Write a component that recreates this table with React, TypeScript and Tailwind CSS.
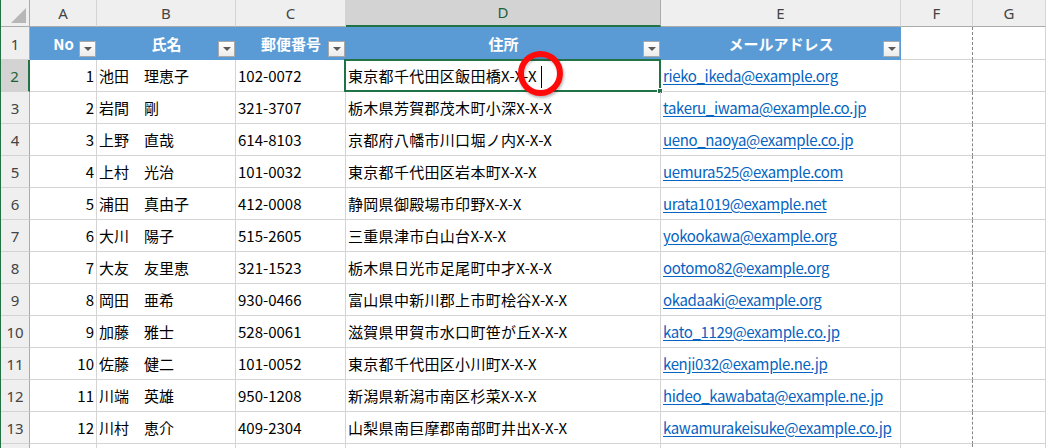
import React from 'react';

type Row = {
  no: number;
  name: string;
  zip: string;
  address: string;
  email: string;
};

const rows: Row[] = [
  { no: 1, name: '池田　理恵子', zip: '102-0072', address: '東京都千代田区飯田橋X-X-X', email: 'rieko_ikeda@example.org' },
  { no: 2, name: '岩間　剛', zip: '321-3707', address: '栃木県芳賀郡茂木町小深X-X-X', email: 'takeru_iwama@example.co.jp' },
  { no: 3, name: '上野　直哉', zip: '614-8103', address: '京都府八幡市川口堀ノ内X-X-X', email: 'ueno_naoya@example.co.jp' },
  { no: 4, name: '上村　光治', zip: '101-0032', address: '東京都千代田区岩本町X-X-X', email: 'uemura525@example.com' },
  { no: 5, name: '浦田　真由子', zip: '412-0008', address: '静岡県御殿場市印野X-X-X', email: 'urata1019@example.net' },
  { no: 6, name: '大川　陽子', zip: '515-2605', address: '三重県津市白山台X-X-X', email: 'yokookawa@example.org' },
  { no: 7, name: '大友　友里恵', zip: '321-1523', address: '栃木県日光市足尾町中才X-X-X', email: 'ootomo82@example.org' },
  { no: 8, name: '岡田　亜希', zip: '930-0466', address: '富山県中新川郡上市町桧谷X-X-X', email: 'okadaaki@example.org' },
  { no: 9, name: '加藤　雅士', zip: '528-0061', address: '滋賀県甲賀市水口町笹が丘X-X-X', email: 'kato_1129@example.co.jp' },
  { no: 10, name: '佐藤　健二', zip: '101-0052', address: '東京都千代田区小川町X-X-X', email: 'kenji032@example.ne.jp' },
  { no: 11, name: '川端　英雄', zip: '950-1208', address: '新潟県新潟市南区杉菜X-X-X', email: 'hideo_kawabata@example.ne.jp' },
  { no: 12, name: '川村　恵介', zip: '409-2304', address: '山梨県南巨摩郡南部町井出X-X-X', email: 'kawamurakeisuke@example.co.jp' },
];

const grid = 'grid grid-cols-[29px_67px_139px_110px_315px_240px_72px_1fr]';
const letters = ['A', 'B', 'C', 'D', 'E', 'F', 'G'];
const headers = ['No', '氏名', '郵便番号', '住所', 'メールアドレス'];

// フィルターボタン
function FilterButton() {
  return (
    <div className="absolute right-[1px] bottom-[3px] flex h-[16px] w-[17px] items-center justify-center border border-[#a9a9a9] bg-gradient-to-b from-[#ffffff] to-[#ececec]">
      <svg width="8" height="4" viewBox="0 0 8 4">
        <path d="M0 0 L8 0 L4 4 Z" fill="#5a5a5a" />
      </svg>
    </div>
  );
}

export default function App() {
  return (
    <div className="h-[448px] w-[1046px] overflow-hidden border-l border-[#217346] bg-white font-['Noto_Sans_CJK_JP',sans-serif] text-[15px] text-black">
      {/* 列見出し */}
      <div className={`${grid} h-[27px] font-['Noto_Sans',sans-serif] text-[15px] text-[#444]`}>
        <div className="flex items-end justify-end border-r border-b border-[#ababab] bg-[#efefef] p-[3px]">
          <svg width="15" height="15" viewBox="0 0 15 15">
            <path d="M15 0 L15 15 L0 15 Z" fill="#b7b7b7" />
          </svg>
        </div>
        {letters.map((l) =>
          l === 'D' ? (
            <div
              key={l}
              className="flex items-center justify-center border-r border-b-2 border-r-[#ababab] border-b-[#217346] bg-[#d3d3d3] text-[#1e5f3a]"
            >
              {l}
            </div>
          ) : (
            <div
              key={l}
              className="flex items-center justify-center border-r border-b border-r-[#d4d4d4] border-b-[#ababab] bg-[#efefef]"
            >
              {l}
            </div>
          )
        )}
      </div>

      {/* 1行目: テーブル見出し */}
      <div className={`${grid} h-[33px]`}>
        <div className="flex items-center justify-center border-r border-b border-r-[#ababab] border-b-[#d4d4d4] bg-[#efefef] pt-[3px] font-['Noto_Sans',sans-serif] text-[#444]">
          1
        </div>
        {headers.map((h) => (
          <div
            key={h}
            className="relative flex items-center justify-center bg-[#5b9bd5] pt-[2px] font-bold text-white"
          >
            {h}
            <FilterButton />
          </div>
        ))}
        <div className="border-r border-b border-[#d4d4d4] [border-right-style:dashed] border-r-[#858585]" />
        <div className="border-r border-b border-[#d4d4d4]" />
      </div>

      {/* データ行 */}
      {rows.map((r, i) => {
        const selected = i === 0;
        return (
          <div key={r.no} className={`${grid} h-[32px]`}>
            <div
              className={
                selected
                  ? "flex items-center justify-center border-r-2 border-b border-r-[#217346] border-b-[#d4d4d4] bg-[#d3d3d3] pt-[2px] font-['Noto_Sans',sans-serif] text-[#1e5f3a]"
                  : "flex items-center justify-center border-r border-b border-r-[#ababab] border-b-[#d4d4d4] bg-[#efefef] pt-[2px] font-['Noto_Sans',sans-serif] text-[#444]"
              }
            >
              {i + 2}
            </div>
            <div className="flex items-center justify-end border-r border-b border-[#d4d4d4] pr-[2px] pt-[1px]">
              {r.no}
            </div>
            <div className="flex items-center border-r border-b border-[#d4d4d4] pl-[2px] pt-[1px] whitespace-nowrap">
              {r.name}
            </div>
            <div className="flex items-center border-r border-b border-[#d4d4d4] pl-[2px] pt-[1px]">
              {r.zip}
            </div>
            <div className="relative flex items-center border-r border-b border-[#d4d4d4] pl-[2px] pt-[1px] whitespace-nowrap">
              <span className="tracking-[0.3px]">{r.address}</span>
              {selected && (
                <>
                  <div className="pointer-events-none absolute -top-[1px] -left-[2px] -right-[1px] -bottom-[1px] border-2 border-[#217346]" />
                  <div className="absolute -right-[3px] -bottom-[3px] h-[6px] w-[6px] border border-white bg-[#217346]" />
                  <div className="absolute top-[6px] left-[195px] h-[22px] w-[1px] bg-black" />
                  <div className="absolute top-[-9px] left-[172px] h-[45px] w-[45px] rounded-full border-[6px] border-[#ff0a0a] shadow-[1px_2px_3px_rgba(0,0,0,0.3),inset_1px_2px_3px_rgba(0,0,0,0.2)]" />
                </>
              )}
            </div>
            <div className="flex items-center overflow-hidden border-r border-b border-[#d4d4d4] pl-[2px] pt-[1px] whitespace-nowrap">
              <span className="tracking-[-0.35px] text-[#0563c1] underline underline-offset-2">{r.email}</span>
            </div>
            <div className="border-r border-b border-[#d4d4d4] [border-right-style:dashed] border-r-[#858585]" />
            <div className="border-r border-b border-[#d4d4d4]" />
          </div>
        );
      })}

      {/* 14行目 (見切れ) */}
      <div className={`${grid} h-[32px]`}>
        <div className="border-r border-b border-r-[#ababab] border-b-[#d4d4d4] bg-[#efefef]" />
        <div className="border-r border-b border-[#d4d4d4]" />
        <div className="border-r border-b border-[#d4d4d4]" />
        <div className="border-r border-b border-[#d4d4d4]" />
        <div className="border-r border-b border-[#d4d4d4]" />
        <div className="border-r border-b border-[#d4d4d4]" />
        <div className="border-r border-b border-[#d4d4d4] [border-right-style:dashed] border-r-[#858585]" />
        <div className="border-r border-b border-[#d4d4d4]" />
      </div>
    </div>
  );
}
